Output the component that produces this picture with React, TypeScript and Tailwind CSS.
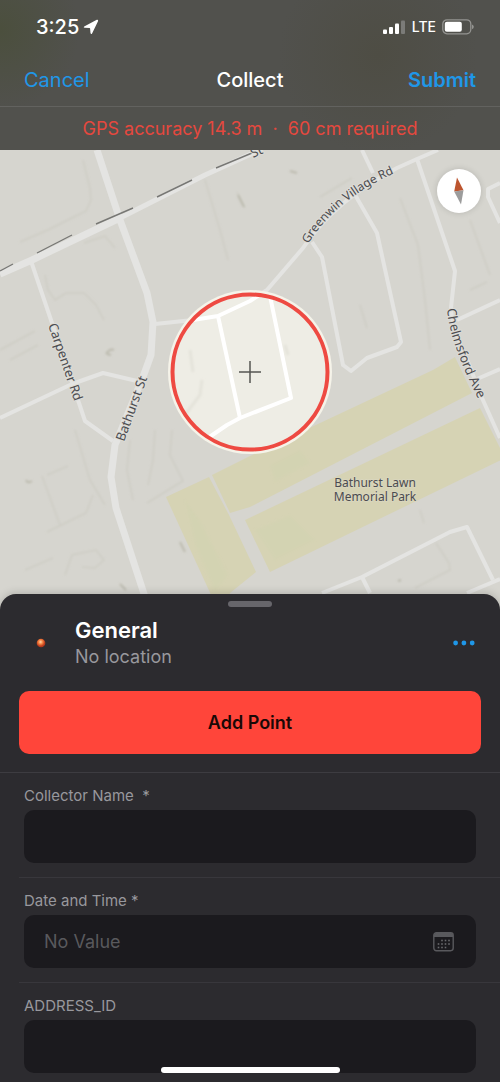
import React from "react";

const streets = [
  "M31 261 L52 323 L78 400 L85 421 L113 441",
  "M0 418 L72 384 L103 373 L137 381",
  "M155 324 L193 320 L218 316 L250 301 L267 290 L303 248 Q335 200 397 168 L417 159 L438 150",
  "M362 150 L373 173",
  "M312 242 L322 257 L343 365 L351 371 L367 358 L397 347 L401 342 L377 233 L354 193",
  "M417 159 L455 271 L451 308 Q452 330 468 362 L482 398 L500 438",
  "M457 320 L500 300",
  "M477 379 L500 369",
  "M500 183 L488 189 L488 197 L500 223",
  "M322 593 L362 577 L450 532 L467 527 L493 580",
  "M467 593 L500 579",
  "M362 577 L370 593",
];

const innerStreets = [
  "M155 324 L193 320 L218 316 L250 301 L267 290 L280 275",
  "M218 316 L240 418",
  "M205 440 L227 425 L240 418 L291 398 L270 296",
];

const dashes = [
  "M0 271 L13 264",
  "M37 253 L72 235",
  "M96 224 L133 208",
  "M157 197 L192 180",
  "M216 168 L252 153",
];

const parks = [
  "M166 497 L209 477 L229 515 L256 572 L230 593 L225 610 L218 610 Z",
  "M212 475 L250 456 L433 370 L455 357 L472 393 L250 507 L230 513 Z",
  "M245 520 L480 408 L505 458 L270 572 Z",
];

const relief = [
  "M83 160 L90 188 L91 200 L86 211 L50 229 L20 242",
  "M45 275 L48 290 L55 300 L66 293 L84 293 L96 305 L104 320",
  "M84 243 L105 236 L115 248",
  "M178 403 L200 373 M172 430 L170 455 L183 481 L147 503",
  "M237 192 L245 208 M205 180 L220 230 L228 260",
  "M320 197 L352 178 M400 198 L418 245 L425 300 L430 350",
  "M47 532 L86 513 L93 495 M75 430 L90 480 L105 505",
  "M42 476 L60 525 M47 475 L68 466",
  "M65 575 L72 555 L96 550 L104 560 L95 568 L82 567",
  "M0 350 L35 331 M10 360 L38 345 M25 570 L53 558",
  "M130 440 L127 470 L133 500 M155 430 L153 460 L148 485",
  "M360 305 L367 328 M470 220 L490 275 M470 290 L487 282",
  "M436 543 L449 563 L450 570 L415 588 M420 510 L424 523",
];

function StatusIcons() {
  return (
    <div className="flex items-center gap-1.5">
      <svg width="23" height="15" viewBox="0 0 23 15" aria-label="Signal">
        <rect x="0" y="9.5" width="4" height="4.5" rx="1" fill="#fff" />
        <rect x="6" y="7" width="4" height="7" rx="1" fill="#fff" />
        <rect x="12" y="3.5" width="4" height="10.5" rx="1" fill="#fff" />
        <rect x="18" y="0.5" width="4" height="13.5" rx="1" fill="#7b7b78" />
      </svg>
      <span className="text-sm font-medium">LTE</span>
      <svg width="32" height="16" viewBox="0 0 32 16" aria-label="Battery">
        <rect x="0.8" y="0.8" width="28" height="14" rx="4.2" fill="none" stroke="#949491" strokeWidth="1.3" />
        <rect x="2.8" y="2.8" width="17" height="10" rx="2" fill="#fff" />
        <path d="M30 5.4 Q31.8 6 31.8 7.8 Q31.8 9.6 30 10.2 Z" fill="#949491" />
      </svg>
    </div>
  );
}

function Header() {
  return (
    <header className="bg-[#51514d] bg-[radial-gradient(circle_at_0px_30px,#4b4f3d,transparent_80px),radial-gradient(circle_at_378px_55px,#4e4d44,transparent_100px)] text-white">
      <div className="flex h-[54px] items-center justify-between pr-[26px] pl-9">
        <div className="flex items-center gap-1">
          <span className="text-xl font-medium">3:25</span>
          <svg width="16" height="16" viewBox="0 0 16 16" aria-label="Location in use">
            <path d="M1.2 7.6 L13.8 0.8 Q15.6 0.2 15 2.2 L9.2 14.2 Q8.1 16 7.5 14 L7.1 9.5 Q7.1 9.1 6.7 9.1 L1.5 8.8 Q0 8.4 1.2 7.6 Z" fill="#fff" />
          </svg>
        </div>
        <StatusIcons />
      </div>
      <nav className="grid h-[53px] grid-cols-3 items-center border-b border-[#62625f] px-6 text-xl">
        <button type="button" className="justify-self-start text-[#1f97e8]">Cancel</button>
        <h1 className="text-center font-medium">Collect</h1>
        <button type="button" className="justify-self-end font-semibold text-[#1f97e8]">Submit</button>
      </nav>
      <p className="flex h-[43px] items-center justify-center text-lg whitespace-pre text-[#e5483e]">
        {"GPS accuracy 14.3 m  ·  60 cm required"}
      </p>
    </header>
  );
}

function MapView() {
  return (
    <div className="relative">
      <svg className="block h-[460px] w-full" viewBox="0 150 500 460" preserveAspectRatio="xMidYMin slice" fill="none" role="img" aria-label="Map">
        <defs>
          <path id="greenwin" d="M308 244 Q340 193 410 167" />
          <path id="chelmsford" d="M447 309 Q450 346 484 410" />
          <clipPath id="accuracy"><circle cx="250" cy="372" r="78" /></clipPath>
          <filter id="soft"><feGaussianBlur stdDeviation="1.2" /></filter>
        </defs>
        <rect y="150" width="500" height="460" fill="#d6d5cf" />
        <g filter="url(#soft)" stroke="#c8c7bd" strokeWidth="1.5">
          <g opacity="0.6">
            {relief.map((d) => <path key={d} d={d} />)}
          </g>
          <path d="M238 195 L244 207 M290 171 L297 173 M106 354 Q110 348 114 350 M107 354 L111 355 M26 480 Q28 484 32 481 M180 542 L185 552 M120 584 L126 590 M398 581 L401 580" stroke="#b5b4a6" strokeWidth="2" opacity="0.8" />
        </g>
        {parks.map((d) => <path key={d} d={d} fill="#d6d3b4" />)}
        <g filter="url(#soft)" fill="#d1d3b1" opacity="0.5">
          <path d="M185 500 L200 520 L228 575 L215 592 L195 545 Z" />
          <path d="M255 530 L290 515 L315 540 L275 560 Z M270 465 L300 450 L310 463 L275 482 Z" />
        </g>
        <g stroke="#e4e4e2" strokeWidth="4" strokeLinejoin="round">
          {streets.map((d) => <path key={d} d={d} />)}
          <path d="M0 274 L32 260 L122 217" strokeWidth="7" />
          <path d="M122 217 L205 175 L262 149" strokeWidth="5" />
          <path d="M97 150 L120 220 L147 293 L153 322 L151 355 L143 377 L115 445 L111 477 L116 508 L146 600" strokeWidth="7" />
        </g>
        <g stroke="#777774" strokeWidth="1.4">
          {dashes.map((d) => <path key={d} d={d} />)}
        </g>

        <circle cx="250" cy="372" r="82" fill="#f5f3e9" />
        <g clipPath="url(#accuracy)">
          <rect x="170" y="292" width="160" height="160" fill="#eeede5" />
          <path d="M185 415 L200 395 L202 380 M190 350 L193 372 M285 345 L288 355" stroke="#e4e3da" strokeWidth="3" filter="url(#soft)" />
          <g stroke="#fff" strokeWidth="4" strokeLinejoin="round">
            {innerStreets.map((d) => <path key={d} d={d} />)}
          </g>
        </g>
        <circle cx="250" cy="372" r="77.5" stroke="#ee4a42" strokeWidth="4" />
        <path d="M239 372 H261 M250 361 V383" stroke="#555552" strokeWidth="1.5" />

        <g fill="#4c4c50" fontSize="13" fontFamily="'Noto Sans', sans-serif" stroke="#dddcd7" strokeWidth="2" strokeLinejoin="round" paintOrder="stroke">
          <text transform="translate(253 158) rotate(-25)">St</text>
          <text fontSize="12"><textPath href="#greenwin">Greenwin Village Rd</textPath></text>
          <text><textPath href="#chelmsford">Chelmsford Ave</textPath></text>
          <text transform="translate(48 325) rotate(71)">Carpenter Rd</text>
          <text transform="translate(124 442) rotate(-70)">Bathurst St</text>
          <g fontSize="12" textAnchor="middle" stroke="#d9d6bd">
            <text x="375" y="487">Bathurst Lawn</text>
            <text x="375" y="501">Memorial Park</text>
          </g>
        </g>
      </svg>
      <button type="button" aria-label="Reset compass" className="absolute top-[19px] right-[19px] flex size-11 items-center justify-center rounded-full bg-white shadow-[0_0_6px_rgba(0,0,0,0.15)]">
        <svg width="12" height="28" viewBox="0 0 12 28" aria-hidden="true">
          <path d="M4 0.5 L10.5 13.3 L1.2 14.6 Z" fill="#bd552f" />
          <path d="M1.2 14.6 L10.5 13.3 L8 27.5 Z" fill="#9c9c9c" />
        </svg>
      </button>
    </div>
  );
}

function CalendarIcon() {
  const dots = [[9, 8.5], [12.5, 8.5], [16, 8.5], [5.5, 12], [9, 12], [12.5, 12], [16, 12], [5.5, 15.5], [9, 15.5], [12.5, 15.5]];
  return (
    <svg width="21" height="20" viewBox="0 0 21 20" fill="none" aria-hidden="true">
      <rect x="0.8" y="0.8" width="19.4" height="17.9" rx="2.6" stroke="#59595d" strokeWidth="1.4" />
      <path d="M1 5 V3 Q1 1 3 1 H18 Q20 1 20 3 V5 Z" fill="#59595d" />
      {dots.map(([x, y]) => <rect key={`${x}-${y}`} x={x - 0.8} y={y - 0.8} width="1.6" height="1.6" fill="#69696d" />)}
    </svg>
  );
}

const boxClass = "h-[53px] w-full rounded-[10px] bg-[#1b1a1e] px-5 text-lg text-[#98989d] outline-none placeholder:text-[#59595d]";

function Field({ id, label, last, children }: { id: string; label: string; last?: boolean; children: React.ReactNode }) {
  return (
    <div className={last ? "ml-[19px] pr-6 pb-2.5 pl-[5px]" : "ml-[19px] h-[105px] border-b border-[#38373c] pr-6 pl-[5px]"}>
      <label htmlFor={id} className="block pt-[13px] pb-1 text-[15px] leading-5 whitespace-pre text-[#98989d]">{label}</label>
      {children}
    </div>
  );
}

export default function App() {
  return (
    <div className="relative min-h-screen bg-[#2c2b2f] font-['Inter','Liberation_Sans',sans-serif]">
      <Header />
      <MapView />
      <main className="relative -mt-4 rounded-t-2xl bg-[#2c2b2f] shadow-[0_-1px_8px_rgba(0,0,0,0.18)]">
        <div className="flex justify-center pt-[7px]">
          <div className="h-1.5 w-11 rounded-full bg-[#67666b]" />
        </div>
        <section className="flex items-center pt-[9px] pr-6 pl-9">
          <svg width="10" height="10" viewBox="0 0 10 10" aria-hidden="true">
            <defs>
              <radialGradient id="marker" cx="45%" cy="38%">
                <stop offset="0" stopColor="#ffd9ad" />
                <stop offset="0.5" stopColor="#f5813f" />
                <stop offset="1" stopColor="#b8391c" />
              </radialGradient>
            </defs>
            <circle cx="5" cy="5" r="4.3" fill="url(#marker)" />
          </svg>
          <div className="ml-[29px] flex-1">
            <h2 className="text-[22px] leading-7 font-semibold text-white">General</h2>
            <p className="text-lg leading-[26px] text-[#98989d]">No location</p>
          </div>
          <button type="button" aria-label="More options" className="flex h-8 items-center">
            <svg width="23" height="6" viewBox="0 0 23 6" fill="#1f97e8" aria-hidden="true">
              <circle cx="2.6" cy="3" r="2.4" />
              <circle cx="10.9" cy="3" r="2.4" />
              <circle cx="19.2" cy="3" r="2.4" />
            </svg>
          </button>
        </section>
        <div className="border-b border-[#3d3c41] px-[19px] pt-[21px] pb-[18px]">
          <button type="button" className="h-[63px] w-full rounded-[10px] bg-[#ff453a] text-lg font-semibold text-[#1a0806]">Add Point</button>
        </div>
        <form>
          <Field id="collector" label="Collector Name  *">
            <input id="collector" type="text" className={boxClass} />
          </Field>
          <Field id="datetime" label="Date and Time *">
            <div className="relative">
              <input id="datetime" type="text" placeholder="No Value" className={boxClass} />
              <button type="button" aria-label="Pick a date" className="absolute inset-y-0 right-0 flex items-center px-[22px]">
                <CalendarIcon />
              </button>
            </div>
          </Field>
          <Field id="address" label="ADDRESS_ID" last>
            <input id="address" type="text" className={boxClass} />
          </Field>
        </form>
      </main>
      <div className="absolute inset-x-0 bottom-2.5 flex justify-center">
        <div className="h-1.5 w-[179px] rounded-full bg-white" />
      </div>
    </div>
  );
}
